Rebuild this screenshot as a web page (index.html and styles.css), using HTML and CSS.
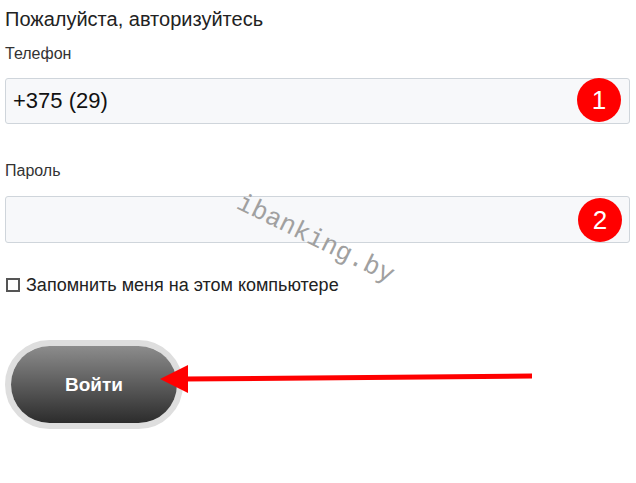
FILE: index.html
```html
<!DOCTYPE html>
<html lang="ru">
<head>
  <meta charset="UTF-8">
  <title>Вход</title>
  <link rel="stylesheet" href="styles.css">
</head>
<body>
  <h2 class="title">Пожалуйста, авторизуйтесь</h2>

  <div class="field">
    <label class="label">Телефон</label>
    <div class="box">
      <input class="input" type="text" value="+375 (29)">
      <span class="badge">1</span>
    </div>
  </div>

  <div class="field second">
    <label class="label">Пароль</label>
    <div class="box">
      <input class="input" type="password" value="">
      <span class="badge">2</span>
    </div>
  </div>

  <label class="remember"><span class="check"></span>Запомнить меня на этом компьютере</label>

  <div class="btn-ring">
    <button class="btn">Войти</button>
  </div>

  <span class="watermark">ibanking.by</span>

  <svg class="arrow" width="636" height="483" viewBox="0 0 636 483">
    <line x1="532" y1="376" x2="184" y2="379" stroke="#f00" stroke-width="5"/>
    <polygon points="160,379 188,365 188,393" fill="#f00"/>
  </svg>
</body>
</html>
```

FILE: styles.css
```css
body {
  margin: 0;
  padding: 7px 6px 0 5px;
  font-family: "Liberation Sans", Arial, sans-serif;
  color: #222;
  background: #fff;
  position: relative;
}
.title {
  margin: 0;
  font-size: 20px;
  line-height: 24px;
  font-weight: normal;
}
.field {
  margin-top: 14px;
}
.field.second {
  margin-top: 38px;
}
.label {
  display: block;
  font-size: 16px;
  line-height: 18px;
  color: #333;
  margin-bottom: 15px;
}
.second .label {
  margin-bottom: 16px;
}
.box {
  position: relative;
  width: 625px;
}
.input {
  display: block;
  box-sizing: border-box;
  width: 625px;
  height: 46px;
  margin: 0;
  padding: 0 7px;
  border: 1px solid #cfd5db;
  border-radius: 3px;
  background: #f7f8fa;
  font-family: inherit;
  font-size: 22px;
  color: #111;
  outline: none;
}
.second .input {
  height: 47px;
}
.badge {
  position: absolute;
  top: 0;
  right: 9px;
  width: 44px;
  height: 44px;
  border-radius: 50%;
  background: #f00;
  color: #fff;
  font-size: 26px;
  line-height: 44px;
  text-align: center;
}
.second .badge {
  top: 2px;
  right: 8px;
}
.remember {
  display: flex;
  align-items: center;
  margin-top: 32px;
  font-size: 18px;
  line-height: 20px;
  color: #222;
}
.check {
  width: 10px;
  height: 10px;
  border: 2px solid #555;
  margin: 0 6px 0 1px;
}
.btn-ring {
  margin-top: 45px;
  width: 166px;
  height: 77px;
  border: 6px solid #dedede;
  border-radius: 45px;
}
.btn {
  display: block;
  width: 100%;
  height: 100%;
  border: none;
  border-radius: 40px;
  background: linear-gradient(#8c8c8c, #2c2c2c);
  color: #fff;
  font-family: inherit;
  font-size: 19px;
  font-weight: bold;
  cursor: pointer;
}
.watermark {
  position: absolute;
  left: 245px;
  top: 188px;
  font-family: "Liberation Mono", monospace;
  font-size: 26px;
  color: #a0a0a0;
  transform: rotate(26deg);
  transform-origin: left top;
}
.arrow {
  position: absolute;
  left: 0;
  top: 0;
}
```
